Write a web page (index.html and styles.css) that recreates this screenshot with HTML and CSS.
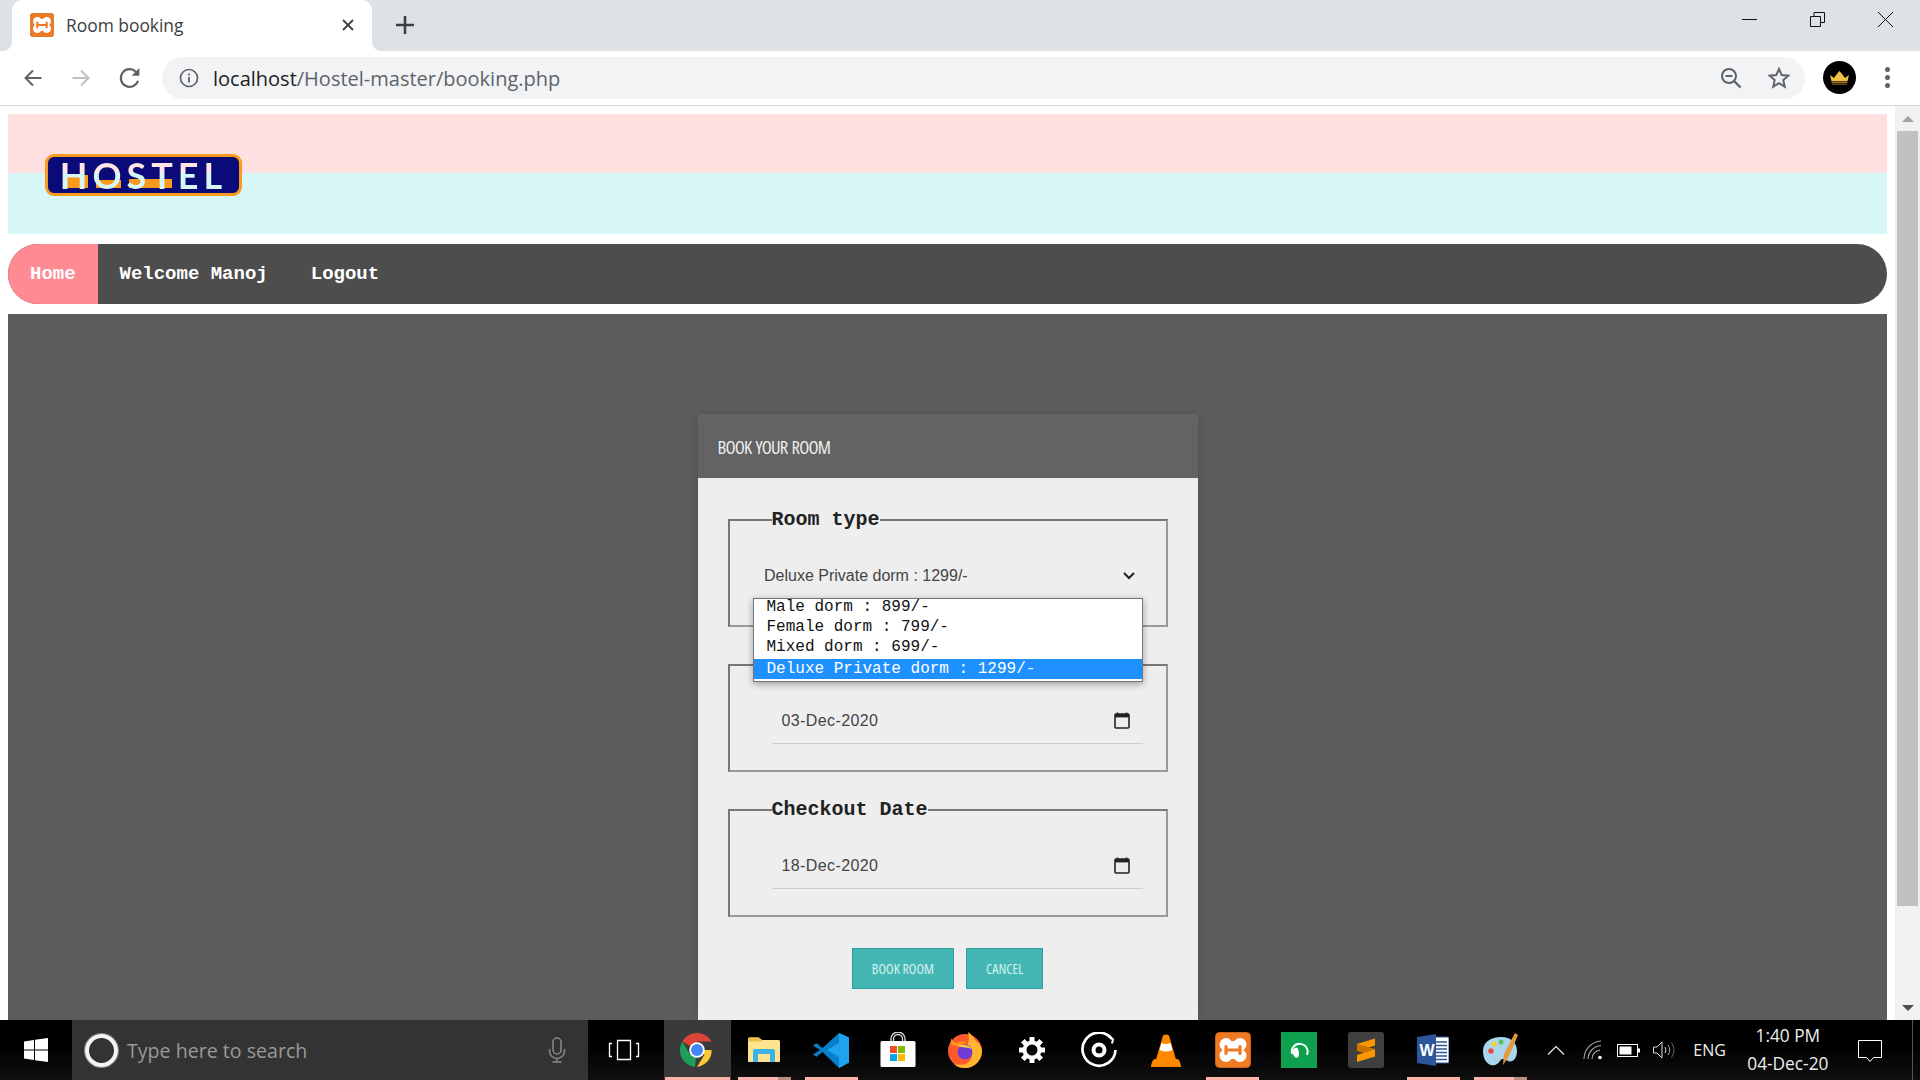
FILE: index.html
```html
<!DOCTYPE html>
<html lang="en">

<head>
    <meta charset="UTF-8">
    <meta name="viewport" content="width=device-width, initial-scale=1.0">
    <title>Room booking</title>
    <link rel="stylesheet" href="styles.css">
</head>

<body>
    <svg class="defs" width="0" height="0">
        <symbol id="xampp" viewBox="0 0 36 36">
            <rect x="0.5" y="0.5" width="35" height="35" rx="4" fill="#ee7a24" stroke="#c9611a" />
            <g fill="#fff">
                <circle cx="11" cy="12.500" r="6.500" />
                <circle cx="25" cy="12.500" r="6.500" />
                <circle cx="11" cy="23.500" r="6.500" />
                <circle cx="25" cy="23.500" r="6.500" />
                <rect x="11" y="9" width="14" height="18" />
                <rect x="8" y="12" width="20" height="12" />
            </g>
            <path d="M11 14.500v7M25 14.500v7M11 18h14" fill="none" stroke="#ee7a24" stroke-width="3.200" stroke-linecap="round" />
        </symbol>
        <symbol id="calendar" viewBox="0 0 16 17">
            <path d="M3.500 0.500v2M12.500 0.500v2" stroke="#222" stroke-width="1.600" />
            <rect x="1" y="2" width="14" height="14" rx="1" fill="none" stroke="#222" stroke-width="1.600" />
            <rect x="1" y="2" width="14" height="3.400" fill="#222" />
        </symbol>
    </svg>

    <div class="window-top">
        <div class="tabstrip">
            <div class="tab">
                <svg class="favicon" width="24" height="24"><use href="#xampp" /></svg>
                <span class="tab-title">Room booking</span>
                <svg class="tab-close" width="12" height="12" viewBox="0 0 12 12"><path d="M1 1l10 10M11 1L1 11" stroke="#3c4043" stroke-width="1.800" /></svg>
            </div>
            <svg class="new-tab" width="18" height="18" viewBox="0 0 18 18"><path d="M9 0v18M0 9h18" stroke="#3c4043" stroke-width="2.600" /></svg>
            <div class="window-buttons">
                <svg width="15" height="15" viewBox="0 0 15 15"><path d="M0 7.500h15" stroke="#111" /></svg>
                <svg width="15" height="15" viewBox="0 0 15 15"><path d="M.5 4.500h10v10H.5zM4 4.500V.5h10.500v10h-4" fill="none" stroke="#111" /></svg>
                <svg width="15" height="15" viewBox="0 0 15 15"><path d="M0 0l15 15M15 0L0 15" stroke="#111" /></svg>
            </div>
        </div>
        <div class="toolbar">
            <svg class="nav-icon" width="20" height="20" viewBox="0 0 20 20"><path d="M18.500 10H2.500M10 2.500L2.500 10l7.500 7.500" fill="none" stroke="#5f6368" stroke-width="2" /></svg>
            <svg class="nav-icon" width="20" height="20" viewBox="0 0 20 20"><path d="M1.500 10h16M10 2.500l7.500 7.500-7.500 7.500" fill="none" stroke="#bdc1c6" stroke-width="2" /></svg>
            <svg class="nav-icon" width="22" height="22" viewBox="0 0 20 20"><path d="M17.300 12.500A8 8 0 1 1 15.500 4.500l2 2" fill="none" stroke="#5f6368" stroke-width="2" /><path d="M18.500 1V8h-7z" fill="#5f6368" /></svg>
            <div class="omnibox">
                <svg width="20" height="20" viewBox="0 0 20 20"><circle cx="10" cy="10" r="8.500" fill="none" stroke="#5f6368" stroke-width="1.700" /><path d="M10 9v5.500M10 5.500v2" stroke="#5f6368" stroke-width="1.800" /></svg>
                <span class="url"><b>localhost</b>/Hostel-master/booking.php</span>
                <svg class="zoom-out" width="22" height="22" viewBox="0 0 22 22"><circle cx="9" cy="9" r="7" fill="none" stroke="#5f6368" stroke-width="2" /><path d="M14 14l6.500 6.500" stroke="#5f6368" stroke-width="2.400" /><path d="M5.500 9h7" stroke="#5f6368" stroke-width="2" /></svg>
                <svg class="star" width="22" height="22" viewBox="0 0 22 22"><path d="M11 2l2.700 6.100 6.600.6-5 4.400 1.500 6.500L11 16.200l-5.800 3.400 1.500-6.500-5-4.400 6.600-.6z" fill="none" stroke="#5f6368" stroke-width="2" /></svg>
            </div>
            <div class="avatar">
                <svg width="19" height="14" viewBox="0 0 19 14"><path d="M0 4l4 3 2.500-3.500L9.500 0l3 3.500L15 7l4-3-1.500 6h-16z" fill="#efc244" /><path d="M1.500 10.500h16V12h-16z" fill="#a8772a" /><path d="M2 12.500h15V14H2z" fill="#6b4a1a" /></svg>
            </div>
            <div class="kebab"><i></i><i></i><i></i></div>
        </div>
    </div>

    <div class="viewport">
        <div class="page">
            <header class="site-header">
                <div class="logo">
                    <span class="logo-town"><i></i><i></i><i></i></span>
                    <span class="logo-text">HOSTEL</span>
                </div>
            </header>
            <nav class="site-nav">
                <a class="active">Home</a>
                <a>Welcome Manoj</a>
                <a>Logout</a>
            </nav>
            <main class="site-main">
                <section class="card">
                    <div class="card-head">BOOK YOUR ROOM</div>
                    <form class="card-body">
                        <fieldset class="room-field">
                            <legend>Room type</legend>
                            <div class="select-value">
                                <span>Deluxe Private dorm : 1299/-</span>
                                <svg width="12" height="8" viewBox="0 0 12 8"><path d="M1 1l5 5 5-5" fill="none" stroke="#222" stroke-width="2" /></svg>
                            </div>
                            <ul class="select-list">
                                <li>Male dorm : 899/-</li>
                                <li>Female dorm : 799/-</li>
                                <li>Mixed dorm : 699/-</li>
                                <li class="selected">Deluxe Private dorm : 1299/-</li>
                            </ul>
                        </fieldset>
                        <fieldset class="under-list">
                            <div class="date-value">
                                <span>03-Dec-2020</span>
                                <svg width="16" height="17"><use href="#calendar" /></svg>
                            </div>
                        </fieldset>
                        <fieldset>
                            <legend>Checkout Date</legend>
                            <div class="date-value">
                                <span>18-Dec-2020</span>
                                <svg width="16" height="17"><use href="#calendar" /></svg>
                            </div>
                        </fieldset>
                        <div class="form-buttons">
                            <button type="button">BOOK ROOM</button>
                            <button type="button">CANCEL</button>
                        </div>
                    </form>
                </section>
            </main>
        </div>
        <div class="scrollbar">
            <div class="scroll-btn"><i class="arrow-up"></i></div>
            <div class="scroll-thumb"></div>
            <div class="scroll-btn"><i class="arrow-down"></i></div>
        </div>
    </div>

    <footer class="taskbar">
        <div class="start">
            <svg width="24" height="24" viewBox="0 0 24 24"><path d="M0 3.400l10-1.400v9.500H0zM11 1.800L24 0v11.500H11zM0 12.500h10V22L0 20.600zM11 12.500h13V24l-13-1.800z" fill="#fff" /></svg>
        </div>
        <div class="search">
            <i class="cortana"></i>
            <span>Type here to search</span>
            <svg width="18" height="26" viewBox="0 0 18 26"><rect x="5" y="1" width="8" height="16" rx="4" fill="none" stroke="#8a8a8a" stroke-width="1.500" /><path d="M1.500 12v2a7.500 7.500 0 0 0 15 0v-2M9 21.500V25M4.500 25h9" fill="none" stroke="#8a8a8a" stroke-width="1.500" /></svg>
        </div>
        <div class="task-view">
            <svg width="32" height="22" viewBox="0 0 32 22"><path d="M9.500 1.500h13v19h-13zM4 4.500H1.500v13H4M28 4.500h2.500v13H28" fill="none" stroke="#fff" stroke-width="1.300" /></svg>
        </div>
        <div class="task-item active running">
            <svg width="34" height="34" viewBox="0 0 34 34">
                <path d="M17 17L2.300 8.500A17 17 0 0 1 31.700 8.500H17z" fill="#db4437" />
                <path d="M17 17h14.700A17 17 0 0 1 17 34l7.500-12.500z" fill="#fcc934" />
                <path d="M17 17l-2 17A17 17 0 0 1 2.300 8.500l7.500 12.500z" fill="#1e9e58" />
                <circle cx="17" cy="17" r="7.800" fill="#fff" />
                <circle cx="17" cy="17" r="6" fill="#4285f4" />
            </svg>
        </div>
        <div class="task-item running stacked">
            <svg width="32" height="26" viewBox="0 0 32 26">
                <path d="M0 2q0-1.500 1.500-1.500h9L14 3h16.500q1.500 0 1.500 1.500V24q0 1-1 1H1q-1 0-1-1z" fill="#ffe490" />
                <path d="M0 2q0-1.500 1.500-1.500h9L14 3v1.500H0z" fill="#eec04d" />
                <path d="M5 25V14q0-2 2-2h18q2 0 2 2v11h-5v-8H10v8z" fill="#38b2e8" />
            </svg>
        </div>
        <div class="task-item running">
            <svg width="36" height="36" viewBox="0 0 36 36">
                <path d="M26 1L36 5.500v25L26 36 9.500 20 3.500 24.800 0 22.500 7 18 0 13.500l3.500-2.300 6 4.800z" fill="#0a7fc9" />
                <path d="M26 1l10 4.500v25L26 36V11L14 18l12 7z" fill="#1ea4ee" />
            </svg>
        </div>
        <div class="task-item">
            <svg width="36" height="36" viewBox="0 0 36 36">
                <path d="M11 11V7a7 7 0 0 1 14 0v4M13.500 11V7a4.500 4.500 0 0 1 9 0v4" fill="none" stroke="#ddd" stroke-width="1.300" />
                <rect x="0.500" y="9" width="35" height="26" rx="1.500" fill="#fff" />
                <rect x="10" y="14" width="7" height="7" fill="#f25022" />
                <rect x="18" y="14" width="7" height="7" fill="#7fba00" />
                <rect x="10" y="22" width="7" height="7" fill="#00a4ef" />
                <rect x="18" y="22" width="7" height="7" fill="#ffb900" />
            </svg>
        </div>
        <div class="task-item">
            <svg width="34" height="36" viewBox="0 0 34 36">
                <circle cx="17" cy="19" r="17" fill="#ff5a2b" />
                <path d="M20 0c6 4 6 8 8 9 4 3 6 7 6 10a17 17 0 0 1-17 17c-4 0-8-1-11-4 6 2 16 1 18-8 1-6-3-9-6-10 4-3 3-9 2-14z" fill="#ffb52e" />
                <path d="M3 6c1 3 3 5 6 5 3-2 7-2 10 0-3 0-7 1-8 3-2 0-6-1-8-2z" fill="#ff9a1f" />
                <circle cx="17" cy="20" r="7.500" fill="#6f3cd4" />
                <path d="M9 14c4-2 11-2 15 3-4-2-9-1-15-3z" fill="#ffcf3a" />
            </svg>
        </div>
        <div class="task-item">
            <svg width="28" height="28" viewBox="0 0 28 28"><circle cx="14" cy="14" r="7.500" fill="none" stroke="#fff" stroke-width="4" /><path d="M14 1v5M14 22v5M1 14h5M22 14h5M4.800 4.800l3.500 3.500M19.700 19.700l3.500 3.500M23.200 4.800l-3.500 3.500M8.300 19.700l-3.500 3.500" stroke="#fff" stroke-width="5" /></svg>
        </div>
        <div class="task-item">
            <svg width="36" height="36" viewBox="0 0 36 36"><path d="M31 7A16.500 16.500 0 1 0 34.500 18" fill="none" stroke="#fff" stroke-width="2.700" /><path d="M27 4l5 3.500-1 4" fill="none" stroke="#fff" stroke-width="2" /><circle cx="18" cy="18" r="5.500" fill="none" stroke="#fff" stroke-width="4" /></svg>
        </div>
        <div class="task-item">
            <svg width="30" height="33" viewBox="0 0 30 33">
                <path d="M12 1.500q3-2 6 0l7 24H5z" fill="#ff8800" />
                <path d="M10.500 9q4.500 2 9 0l2 7q-6.500 3-13 0z" fill="#fff" />
                <path d="M4 25h22q3 0 4 8H0q1-8 4-8z" fill="#ff8800" />
            </svg>
        </div>
        <div class="task-item running">
            <svg width="36" height="36"><use href="#xampp" /></svg>
        </div>
        <div class="task-item">
            <svg width="36" height="36" viewBox="0 0 36 36"><rect width="36" height="36" fill="#0fa04f" /><path d="M11 22a8 8 0 1 1 15 1" fill="none" stroke="#fff" stroke-width="1.800" /><path d="M12 18c4-6 6 0 6 4s-3 5-5 2-2-4-1-6z" fill="#fff" /></svg>
        </div>
        <div class="task-item">
            <svg width="36" height="36" viewBox="0 0 36 36"><rect width="36" height="36" rx="3" fill="#3f3f3f" /><path d="M27 6.500v7L9 19v-7z" fill="#ff9800" /><path d="M9 19l18 5.500V17L9 12z" fill="#c87300" /><path d="M27 17.500v7L9 30v-7z" fill="#ff9800" /></svg>
        </div>
        <div class="task-item running">
            <svg width="32" height="32" viewBox="0 0 32 32">
                <rect x="15" y="3" width="17" height="26" rx="1" fill="#fff" stroke="#2b579a" />
                <path d="M18 8h12M18 11.500h12M18 15h12M18 18.500h12M18 22h12M18 25.500h12" stroke="#2b579a" stroke-width="1.500" />
                <path d="M0 3l19-3v32L0 29z" fill="#2b579a" />
                <text class="word-w" x="2.500" y="21.500">W</text>
            </svg>
        </div>
        <div class="task-item running stacked">
            <svg width="36" height="36" viewBox="0 0 36 36">
                <path d="M1 19C1 10 9 5 19 5s16 6 16 14-5 12-9 10-6-3-8 0-5 5-9 4-8-6-8-14z" fill="#a9d6ec" />
                <circle cx="9" cy="19" r="2.700" fill="#e84a3a" />
                <circle cx="12" cy="12" r="2.700" fill="#f4d03f" />
                <circle cx="19" cy="10" r="2.500" fill="#5fbf5f" />
                <path d="M22 22L33 1l3 2-9 21-6 9z" fill="#e39a3b" />
            </svg>
        </div>
        <div class="tray">
            <svg class="tray-chevron" width="18" height="10" viewBox="0 0 18 10"><path d="M1 9.500l8-8 8 8" fill="none" stroke="#eee" stroke-width="1.200" /></svg>
            <svg class="tray-wifi" width="20" height="20" viewBox="0 0 20 20"><path d="M1 19A18 18 0 0 1 18 1M5 19A14 14 0 0 1 18 5.500M9 19a9 9 0 0 1 8-9" fill="none" stroke="#aaa" stroke-width="1.100" /><circle cx="17" cy="17.500" r="1.800" fill="#fff" /></svg>
            <svg class="tray-battery" width="23" height="13" viewBox="0 0 23 13"><rect x=".5" y=".5" width="20" height="12" fill="none" stroke="#fff" /><rect x="2.500" y="2.500" width="12" height="8" fill="#fff" /><rect x="21" y="4.500" width="2" height="4" fill="#fff" /></svg>
            <svg class="tray-volume" width="22" height="18" viewBox="0 0 22 18"><path d="M.5 6h3.500l5-5v16l-5-5H.5z" fill="none" stroke="#ddd" /><path d="M12 6q2 3 0 6" fill="none" stroke="#ddd" /><path d="M15 4q3.500 5 0 10" fill="none" stroke="#aaa" /><path d="M18.500 1.500q5 7.500 0 15" fill="none" stroke="#666" /></svg>
            <span class="tray-lang">ENG</span>
            <div class="clock"><span>1:40 PM</span><span>04-Dec-20</span></div>
            <svg class="tray-action" width="24" height="24" viewBox="0 0 24 24"><path d="M.5 .5h23v17h-8l-3.500 4-3.500-4h-8z" fill="none" stroke="#fff" /></svg>
            <i class="show-desktop"></i>
        </div>
    </footer>
</body>

</html>
```

FILE: styles.css
```css
* {
    box-sizing: border-box;
}

html,
body {
    height: 100%;
}

body {
    margin: 0;
    display: flex;
    flex-direction: column;
    overflow: hidden;
    background: #fff;
    font-family: 'Open Sans', sans-serif;
}

.defs {
    position: absolute;
}

/* browser chrome */
.window-top {
    flex: none;
}

.tabstrip {
    height: 51px;
    display: flex;
    align-items: center;
    background: #dee1e6;
}

.tab {
    position: relative;
    width: 360px;
    height: 51px;
    margin-left: 12px;
    padding: 0 0 1px 18px;
    display: flex;
    align-items: center;
    background: #fff;
    border-radius: 10px 10px 0 0;
}

.tab::before,
.tab::after {
    content: '';
    position: absolute;
    bottom: 0;
    width: 10px;
    height: 10px;
}

.tab::before {
    left: -10px;
    background: radial-gradient(circle at 0 0, #dee1e6 10px, #fff 10.5px);
}

.tab::after {
    right: -10px;
    background: radial-gradient(circle at 100% 0, #dee1e6 10px, #fff 10.5px);
}

.tab-title {
    margin-left: 12px;
    font-size: 17.4px;
    color: #3c4043;
}

.tab-close {
    margin-left: auto;
    margin-right: 18px;
}

.new-tab {
    margin-left: 24px;
    margin-bottom: 1px;
}

.window-buttons {
    margin-left: auto;
    margin-right: 27px;
    margin-top: -12px;
    display: flex;
    gap: 53px;
}

.toolbar {
    height: 55px;
    padding: 0 0 1px 23px;
    display: flex;
    align-items: center;
    border-bottom: 1px solid #d6d7d9;
    background: #fff;
}

.nav-icon {
    margin-right: 28px;
}

.nav-icon:nth-child(3) {
    margin-right: 27px;
}

.omnibox {
    width: 1643px;
    height: 42px;
    margin-left: -6px;
    padding-left: 17px;
    display: flex;
    align-items: center;
    background: #f1f3f4;
    border-radius: 21px;
}

.url {
    margin-left: 14px;
    padding-top: 1px;
    font-size: 20px;
    color: #5f6368;
}

.url b {
    font-weight: 400;
    color: #202124;
}

.zoom-out {
    margin-left: auto;
}

.star {
    margin-left: 26px;
    margin-right: 15px;
}

.avatar {
    width: 33px;
    height: 33px;
    margin-left: 18px;
    display: flex;
    align-items: center;
    justify-content: center;
    border-radius: 50%;
    background: #000;
}

.kebab {
    margin-left: 29px;
    display: flex;
    flex-direction: column;
    gap: 3px;
}

.kebab i {
    width: 5px;
    height: 5px;
    border-radius: 50%;
    background: #5f6368;
}

/* page */
.viewport {
    flex: 1;
    min-height: 0;
    display: flex;
}

.page {
    flex: 1;
    min-width: 0;
    padding: 8px 8px 0;
    display: flex;
    flex-direction: column;
}

.site-header {
    height: 120px;
    flex: none;
    padding: 40px 0 0 37px;
    background: linear-gradient(#ffe0e0 59px, #d6f7f6 59px);
}

.logo {
    position: relative;
    width: 197px;
    height: 42px;
    border: 3px solid #f99a1c;
    border-radius: 9px;
    background: #0a0a78;
    filter: blur(0.6px);
    text-align: center;
}

.logo-text {
    position: relative;
    display: block;
    font-family: 'Lato', sans-serif;
    font-size: 36px;
    line-height: 36px;
    font-weight: 700;
    letter-spacing: 5px;
    background: linear-gradient(#ffe6e6 44%, #d6f7f6 44%);
    -webkit-background-clip: text;
    background-clip: text;
    color: transparent;
}

.logo-town {
    position: absolute;
    left: 17px;
    bottom: 5px;
    display: flex;
    align-items: flex-end;
    gap: 8px;
}

.logo-town i {
    width: 23px;
    height: 13px;
    background: #f99a1c;
}

.logo-town i:nth-child(2) {
    width: 25px;
    height: 8px;
}

.logo-town i:nth-child(3) {
    width: 43px;
    height: 9px;
}

.site-nav {
    height: 60px;
    flex: none;
    margin-top: 10px;
    display: flex;
    overflow: hidden;
    background: #4d4d4d;
    border-radius: 30px;
}

.site-nav a {
    padding: 0 21.5px;
    display: flex;
    align-items: center;
    font-family: 'Liberation Mono', monospace;
    font-size: 19px;
    font-weight: 700;
    color: #fff;
}

.site-nav .active {
    width: 90px;
    padding-left: 22px;
    background: #ff8a94;
}

.site-main {
    flex: 1;
    min-height: 0;
    margin-top: 10px;
    padding-top: 100px;
    display: flex;
    justify-content: center;
    background: #5c5c5c;
}

.card {
    width: 500px;
    background: #eee;
    box-shadow: 0 0 8px rgba(0, 0, 0, 0.12);
}

.card-head {
    height: 64px;
    padding: 1px 0 0 20px;
    display: flex;
    align-items: center;
    background: #636363;
    font-size: 18.5px;
    font-stretch: 75%;
    font-weight: 400;
    color: #eee;
    letter-spacing: -0.8px;
    word-spacing: 1.5px;
}

.card-body {
    padding: 30px 30px 0;
}

fieldset {
    position: relative;
    height: 119px;
    margin: 0 0 26px;
    padding: 0 23px 0 42px;
    border: 2px solid #808080;
    border-top-color: #777;
    border-left-color: #777;
    border-right-color: #999;
    border-bottom-color: #999;
}

/* its legend lies behind the open list, so the box starts at the border */
fieldset.under-list {
    height: 108px;
    margin-top: 37px;
}

fieldset.under-list .date-value {
    margin-top: 27px;
}

legend {
    padding: 0;
    font-family: 'Liberation Mono', monospace;
    font-size: 20px;
    font-weight: 700;
    line-height: 23px;
    color: #222;
}

.select-value {
    height: 40px;
    margin: 25px 0 0 -7.5px;
    display: flex;
    align-items: center;
    justify-content: space-between;
    padding-right: 8px;
    font-family: 'Liberation Sans', sans-serif;
    font-size: 16px;
    color: #444;
}

.select-list {
    position: absolute;
    z-index: 2;
    left: 23px;
    top: 67px;
    width: 390px;
    height: 84px;
    margin: 0;
    padding: 0;
    list-style: none;
    overflow: hidden;
    background: #fff;
    border: 1px solid #767676;
    box-shadow: 0 2px 7px rgba(0, 0, 0, 0.35);
    font-family: 'Liberation Mono', monospace;
    font-size: 16px;
    line-height: 20px;
    color: #111;
}

.select-list li {
    padding-left: 13px;
}

.select-list li:first-child {
    margin-top: -2px;
}

.select-list .selected {
    margin-top: 2px;
    background: #1e90ff;
    color: #fff;
}

.date-value {
    height: 51px;
    margin-top: 17px;
    padding: 5px 3px 0 10px;
    display: flex;
    align-items: center;
    justify-content: space-between;
    border-bottom: 1px solid #ccc;
    font-family: 'Liberation Sans', sans-serif;
    font-size: 16px;
    letter-spacing: 0.4px;
    color: #444;
}

.date-value svg {
    margin-right: 10px;
}

.form-buttons {
    margin-top: 31px;
    display: flex;
    justify-content: center;
    gap: 12px;
}

.form-buttons button {
    height: 41px;
    padding: 0 19px;
    background: #44b7b5;
    border: 1px solid #2f9f9d;
    font-family: 'Open Sans', sans-serif;
    font-stretch: 75%;
    font-size: 14px;
    color: #d5f1ec;
}

/* scrollbar */
.scrollbar {
    width: 25px;
    flex: none;
    display: flex;
    flex-direction: column;
    background: #f1f1f1;
}

.scroll-btn {
    height: 25px;
    flex: none;
    display: flex;
    align-items: center;
    justify-content: center;
}

.arrow-up,
.arrow-down {
    width: 0;
    height: 0;
    border-left: 6px solid transparent;
    border-right: 6px solid transparent;
}

.arrow-up {
    border-bottom: 6px solid #a3a3a3;
}

.arrow-down {
    border-top: 6px solid #505050;
}

.scroll-thumb {
    height: 775px;
    margin: 0 2px;
    flex: none;
    background: #c1c1c1;
}

.scrollbar .scroll-btn:last-child {
    margin-top: auto;
}

/* taskbar */
.taskbar {
    height: 60px;
    flex: none;
    display: flex;
    align-items: stretch;
    background: linear-gradient(#000 40%, #0f0f0f);
}

.start {
    width: 72px;
    display: flex;
    align-items: center;
    justify-content: center;
}

.search {
    width: 516px;
    padding: 0 22px 0 13px;
    display: flex;
    align-items: center;
    background: #333;
    font-size: 19.6px;
    color: #999;
}

.search span {
    margin-left: 9px;
}

.search svg {
    margin-left: auto;
}

.cortana {
    width: 33px;
    height: 33px;
    border-radius: 50%;
    border: 4px solid #f4f4f4;
    box-shadow: 0 0 0 1px #888;
}

.task-view {
    width: 76px;
    padding-right: 4px;
    display: flex;
    align-items: center;
    justify-content: center;
}

.task-item {
    position: relative;
    width: 66.9px;
    display: flex;
    align-items: center;
    justify-content: center;
}

.task-item.active {
    background: #3a3a3a;
}

.task-item.running::after {
    content: '';
    position: absolute;
    left: 7px;
    right: 7px;
    bottom: 0;
    height: 3px;
    background: #ffb3ab;
}

.task-item.active::after {
    left: 1px;
    right: 1px;
}

.task-item.stacked::after {
    background: linear-gradient(90deg, #ffb3ab 40px, #b98c86 40px);
}

.word-w {
    font-family: 'Liberation Sans', sans-serif;
    font-size: 16px;
    font-weight: 700;
    fill: #fff;
}

.tray {
    flex: 1;
    padding-left: 13.7px;
    display: flex;
    align-items: center;
    color: #eee;
}

.tray-wifi {
    margin-left: 18px;
}

.tray-battery {
    margin-left: 14px;
}

.tray-volume {
    margin-left: 13px;
}

.tray-lang {
    margin-left: 18px;
    font-size: 16px;
}

.clock {
    width: 84px;
    margin-left: 20px;
    display: flex;
    flex-direction: column;
    align-items: center;
    font-size: 17.3px;
    line-height: 28px;
}

.tray-action {
    margin-left: 28px;
    margin-top: 4px;
}

.show-desktop {
    width: 1px;
    height: 100%;
    margin-left: 30px;
    background: #555;
}
```
